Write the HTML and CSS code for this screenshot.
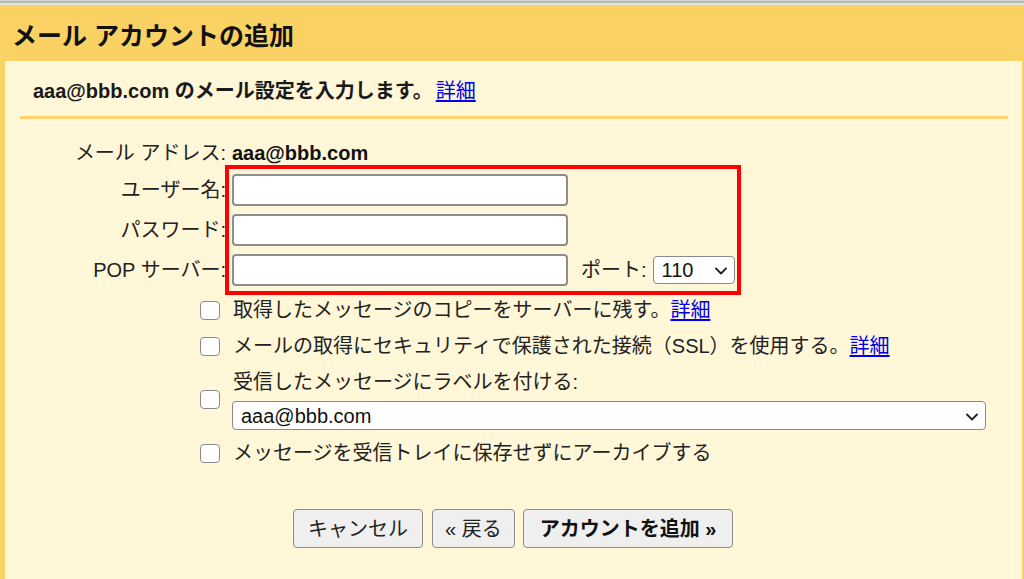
FILE: index.html
```html
<!DOCTYPE html>
<html lang="ja">
<head>
<meta charset="utf-8">
<title>メール アカウントの追加</title>
<link rel="stylesheet" href="styles.css">
</head>
<body>
<div class="chrome-top"></div>
<header class="head"><h1 class="title">メール アカウントの追加</h1></header>
<main class="panel">
  <p class="intro"><b>aaa@bbb.com のメール設定を入力します。</b><a class="link" href="#">詳細</a></p>
  <hr class="rule">
  <div class="fields">
    <div class="lbl">メール アドレス:</div>
    <div class="val strong">aaa@bbb.com</div>
    <label class="lbl" for="u">ユーザー名:</label>
    <div class="val"><input id="u" class="txt" type="text"></div>
    <label class="lbl" for="p">パスワード:</label>
    <div class="val"><input id="p" class="txt" type="password"></div>
    <label class="lbl" for="s">POP サーバー:</label>
    <div class="val">
      <input id="s" class="txt" type="text">
      <span class="port-lbl">ポート:</span>
      <span class="sel sel-port">
        <select class="sel-el"><option>110</option><option>995</option></select>
        <svg class="chev" width="12" height="8" viewBox="0 0 12 8"><path d="M1 1.5 L6 6.5 L11 1.5" fill="none" stroke="#222" stroke-width="1.8" stroke-linecap="round" stroke-linejoin="round"/></svg>
      </span>
    </div>
    <div class="annot"></div>
  </div>
  <div class="opts">
    <div class="opt">
      <input class="cb" type="checkbox">
      <span class="opt-text">取得したメッセージのコピーをサーバーに残す。<a class="link" href="#">詳細</a></span>
    </div>
    <div class="opt">
      <input class="cb" type="checkbox">
      <span class="opt-text">メールの取得にセキュリティで保護された接続（SSL）を使用する。<a class="link" href="#">詳細</a></span>
    </div>
    <div class="opt">
      <input class="cb" type="checkbox">
      <div class="opt-body">
        <div class="opt-text">受信したメッセージにラベルを付ける:</div>
        <span class="sel sel-label">
          <select class="sel-el"><option>aaa@bbb.com</option></select>
          <svg class="chev" width="12" height="8" viewBox="0 0 12 8"><path d="M1 1.5 L6 6.5 L11 1.5" fill="none" stroke="#222" stroke-width="1.8" stroke-linecap="round" stroke-linejoin="round"/></svg>
        </span>
      </div>
    </div>
    <div class="opt">
      <input class="cb" type="checkbox">
      <span class="opt-text">メッセージを受信トレイに保存せずにアーカイブする</span>
    </div>
  </div>
  <div class="actions">
    <button class="btn" type="button">キャンセル</button>
    <button class="btn btn-back" type="button">« 戻る</button>
    <button class="btn btn-primary" type="button">アカウントを追加 »</button>
  </div>
</main>
</body>
</html>
```

FILE: styles.css
```css
* { box-sizing: border-box; }
html, body { margin: 0; padding: 0; height: 100%; }
body {
  font-family: "Liberation Sans", "Noto Sans CJK JP", sans-serif;
  font-size: 20px;
  color: #1e1e1e;
  background: #fff7d8;
  display: flex;
  flex-direction: column;
  overflow: hidden;
}
.chrome-top {
  height: 5px;
  background: #e6e5dc;
  border-top: 1px solid #d8d8d2;
  box-shadow: inset 0 1px 0 #b3b7b2, inset 0 2px 0 #b8bbb6;
  flex: none;
}
.head {
  height: 56px;
  background: #fad264;
  display: flex;
  align-items: center;
  padding: 5px 0 0 12px;
  flex: none;
}
.title {
  margin: 0;
  font-size: 25px;
  font-weight: bold;
  line-height: 30px;
  color: #111;
}
.panel {
  flex: 1;
  background: #fff7d8;
  border-left: 5px solid #fad264;
  border-right: 2px solid #fad264;
  padding: 0;
}
.intro {
  margin: 0;
  padding: 17px 0 0 28px;
  line-height: 26px;
  height: 43px;
}
.intro b { font-weight: bold; color: #1a1a1a; }
.intro .link { margin-left: 3px; }
.link { color: #0000ee; text-decoration: underline; text-underline-offset: 2px; }
.rule {
  margin: 12px 14px 0 15px;
  height: 3px;
  border: 0;
  background: #fcd36a;
}
.fields {
  position: relative;
  margin-top: 21px;
  display: grid;
  grid-template-columns: 221px 1fr;
  column-gap: 6px;
  row-gap: 8px;
  align-items: center;
}
.lbl {
  text-align: right;
  line-height: 26px;
  white-space: nowrap;
  color: #222;
}
.val {
  display: flex;
  align-items: center;
  line-height: 26px;
}
.strong { font-weight: bold; color: #111; }
.txt {
  width: 336px;
  height: 32px;
  background: #fff;
  border: 2px solid #8e8e8e;
  border-radius: 4px;
  font: inherit;
  padding: 0 6px;
  outline: none;
}
.port-lbl { margin-left: 13px; margin-right: 6px; color: #222; }
.sel {
  position: relative;
  display: inline-block;
}
.sel-el {
  appearance: none;
  -webkit-appearance: none;
  width: 100%;
  height: 100%;
  background: #fff;
  border: 1.5px solid #8a8a8a;
  border-radius: 4px;
  font: inherit;
  color: #111;
  padding: 0 0 0 8px;
  outline: none;
}
.sel-port { width: 82px; height: 28px; }
.sel-label { width: 754px; height: 29px; display: block; margin-left: -1px; }
.chev {
  position: absolute;
  right: 8px;
  top: 50%;
  margin-top: -3px;
  pointer-events: none;
}
.annot {
  position: absolute;
  left: 220px;
  top: 25px;
  width: 516px;
  height: 130px;
  border: 4px solid #ff0000;
  pointer-events: none;
}
.opts {
  margin-top: 11px;
  padding-left: 195px;
  display: flex;
  flex-direction: column;
  gap: 10px;
}
.opt {
  display: flex;
  align-items: center;
  gap: 13px;
}
.cb {
  appearance: none;
  -webkit-appearance: none;
  margin: 0;
  width: 20px;
  height: 19px;
  background: #fff;
  border: 1.5px solid #8a8a8a;
  border-radius: 4px;
  flex: none;
}
.opt-text { line-height: 26px; color: #222; white-space: nowrap; }
.opt-body { display: flex; flex-direction: column; gap: 6px; }
.actions {
  margin-top: 43px;
  padding-left: 288px;
  display: flex;
  gap: 8px;
}
.btn {
  height: 39px;
  padding: 0 14px;
  background: #efefef;
  border: 1.5px solid #8c8c8c;
  border-radius: 4px;
  font: inherit;
  color: #222;
  line-height: 26px;
}
.btn-back { padding: 0 12px; margin-left: 1px; }
.btn-primary { font-weight: bold; color: #111; padding: 0 16px; }
```
